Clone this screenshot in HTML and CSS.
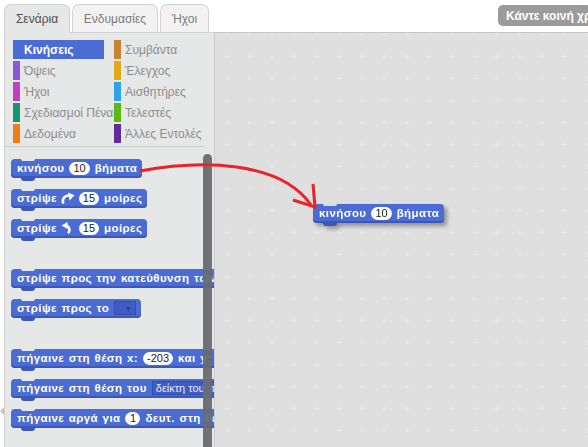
FILE: index.html
```html
<!DOCTYPE html>
<html lang="el">
<head>
  <meta charset="UTF-8" />
  <title>Σενάρια</title>
  <link rel="stylesheet" href="styles.css">
</head>
<body>

  <div class="top">
    <div class="tabs">
      <div class="tab active">Σενάρια</div>
      <div class="tab">Ενδυμασίες</div>
      <div class="tab">Ήχοι</div>
    </div>
    <div class="share">Κάντε κοινή χρήση</div>
  </div>

  <div class="main">
    <div class="gutter"><span class="gutter-arrow"></span></div>

    <div class="side">
      <div class="cats">
        <div class="cat selected">Κινήσεις</div>
        <div class="cat"><i style="background:#c88330"></i>Συμβάντα</div>
        <div class="cat"><i style="background:#8a55d7"></i>Όψεις</div>
        <div class="cat"><i style="background:#e1a91a"></i>Έλεγχος</div>
        <div class="cat"><i style="background:#bb42c3"></i>Ήχοι</div>
        <div class="cat"><i style="background:#2ca5e2"></i>Αισθητήρες</div>
        <div class="cat"><i style="background:#0e9a6c"></i>Σχεδιασμοί Πένας</div>
        <div class="cat"><i style="background:#5cb712"></i>Τελεστές</div>
        <div class="cat"><i style="background:#ee7d16"></i>Δεδομένα</div>
        <div class="cat"><i style="background:#632d99"></i>Άλλες Εντολές</div>
      </div>

      <div class="palette">
        <div class="block">κινήσου <span class="num">10</span> βήματα</div>
        <div class="block">στρίψε
          <svg class="turn" viewBox="0 0 14 12" width="14" height="12"><path d="M2.5 11.5 A5.5 5.5 0 0 1 8.5 3.6" stroke="#fff" stroke-width="2.6" fill="none"/><path d="M7 0.5 L13.5 3.2 L8.6 8.4 Z" fill="#fff"/></svg>
          <span class="num">15</span> μοίρες</div>
        <div class="block">στρίψε
          <svg class="turn" viewBox="0 0 14 12" width="14" height="12"><path d="M5.5 3.4 A4.8 4.8 0 0 1 7 11.2" stroke="#fff" stroke-width="2.6" fill="none"/><path d="M0.5 3.4 L6.5 0 L6.5 7 Z" fill="#fff"/></svg>
          <span class="num">15</span> μοίρες</div>

        <div class="block gap">στρίψε προς την κατεύθυνση των <span class="num">90</span></div>
        <div class="block">στρίψε προς το <span class="drop"><b>▼</b></span></div>

        <div class="block gap">πήγαινε στη θέση x: <span class="num">-203</span> και y: <span class="num">35</span></div>
        <div class="block">πήγαινε στη θέση του <span class="drop text">δείκτη του ποντικιού <b>▼</b></span></div>
        <div class="block">πήγαινε αργά για <span class="num">1</span> δευτ. στη θέση x: <span class="num">0</span></div>
      </div>

      <div class="scrollbar"></div>
    </div>

    <div class="stage">
      <svg class="grid" width="100%" height="100%">
        <defs>
          <pattern id="plus" x="1" y="-10" width="22.5" height="22" patternUnits="userSpaceOnUse">
            <path d="M11 9 v5 M8.5 11.5 h5" stroke="#e8e8e8" stroke-width="1"/>
          </pattern>
        </defs>
        <rect width="100%" height="100%" fill="url(#plus)"/>
      </svg>
      <div class="block dragged">κινήσου <span class="num">10</span> βήματα</div>
    </div>
  </div>

  <svg class="arrow" width="588" height="447" viewBox="0 0 588 447">
    <path d="M140 171 C200 160 280 160 311 205" stroke="#e8232b" stroke-width="3" fill="none"/>
    <path d="M313 184 L315 207 L293 200" stroke="#e8232b" stroke-width="3" fill="none"/>
  </svg>

</body>
</html>
```

FILE: styles.css
```css
* {
  box-sizing: border-box;
  margin: 0;
  padding: 0;
}

body {
  width: 588px;
  height: 447px;
  overflow: hidden;
  background: #fff;
  font-family: 'Liberation Sans', Arial, sans-serif;
  position: relative;
}

/* top: tabs and share button */
.top {
  display: flex;
  height: 32px;
  padding-left: 4px;
}

.tabs {
  flex: 0 0 494px;
  display: flex;
  gap: 2px;
  align-items: flex-end;
}

.tab {
  height: 28px;
  padding: 0 12px;
  display: flex;
  align-items: center;
  font-size: 12px;
  color: #7a7a7a;
  background: #f2f2f2;
  border: 1px solid #d2d2d2;
  border-bottom: none;
  border-radius: 7px 7px 0 0;
}

.tab.active {
  width: 66px;
  justify-content: center;
  color: #4d4d4d;
  background: #e6e7e7;
  height: 29px;
  margin-bottom: -1px;
  position: relative;
  z-index: 2;
}

.tab:nth-child(2) { width: 86px; justify-content: center; }
.tab:nth-child(3) { width: 49px; justify-content: center; }

.share {
  flex-shrink: 0;
  margin-top: 5px;
  height: 21px;
  padding: 0 8px;
  display: flex;
  align-items: center;
  white-space: nowrap;
  background: #9b9b9b;
  color: #fff;
  font-size: 12px;
  font-weight: bold;
  border-radius: 5px;
}

/* main area */
.main {
  display: flex;
  height: 415px;
}

.gutter {
  width: 4px;
  flex-shrink: 0;
  display: flex;
  flex-direction: column;
}

.gutter-arrow {
  margin-top: 375px;
  width: 0;
  height: 0;
  border-top: 4px solid transparent;
  border-bottom: 4px solid transparent;
  border-right: 4px solid #c4c4c4;
}

.side {
  width: 210px;
  flex-shrink: 0;
  background: #e6e7e7;
  border-left: 1px solid #cfcfcf;
  border-top: 1px solid #d2d2d2;
  position: relative;
  overflow: hidden;
}

.cats {
  display: grid;
  grid-template-columns: 91px 91px;
  column-gap: 10px;
  row-gap: 2px;
  padding: 7px 0 0 8px;
  margin-right: 10px;
  padding-bottom: 3px;
  border-bottom: 1px solid #cdcdcd;
}

.cat {
  height: 19px;
  display: flex;
  align-items: center;
  gap: 4px;
  font-size: 12px;
  color: #8d8d8d;
  white-space: nowrap;
}

.cat i {
  width: 7px;
  height: 19px;
  flex-shrink: 0;
}

.cat.selected {
  background: #4a6cd4;
  color: #fff;
  font-weight: bold;
  padding-left: 11px;
}

.palette {
  display: flex;
  flex-direction: column;
  align-items: flex-start;
  padding: 12px 0 0 6px;
}

.block {
  position: relative;
  display: inline-flex;
  align-items: center;
  gap: 5px;
  height: 19px;
  padding: 0 5px 1px 6px;
  margin-bottom: 11px;
  background: #4a6cd4;
  color: #fff;
  font-size: 11.5px;
  font-weight: bold;
  letter-spacing: 0.4px;
  white-space: nowrap;
  word-spacing: 1px;
  border-radius: 4px;
  box-shadow: inset 0 -2px 0 #3b58b8;
}

.block::before {
  content: '';
  position: absolute;
  top: 0;
  left: 10px;
  width: 14px;
  height: 2px;
  background: #e6e7e7;
  border-radius: 0 0 3px 3px;
}

.block::after {
  content: '';
  position: absolute;
  bottom: -3px;
  left: 10px;
  width: 14px;
  height: 3px;
  background: #3b58b8;
  border-radius: 0 0 3px 3px;
}

.block.gap {
  margin-top: 20px;
}

.num {
  display: inline-flex;
  align-items: center;
  justify-content: center;
  min-width: 15px;
  height: 13px;
  padding: 0 4px;
  background: #fff;
  color: #222;
  font-weight: normal;
  font-size: 11px;
  letter-spacing: 0;
  border-radius: 7px;
  word-spacing: 0;
}

.drop {
  display: inline-flex;
  align-items: center;
  justify-content: flex-end;
  width: 22px;
  height: 14px;
  padding: 0 3px;
  background: #3e5cc1;
  border: 1px solid #3250b0;
  font-weight: normal;
}

.drop b {
  font-size: 7px;
  color: #263f8e;
}

.drop.text {
  width: auto;
  gap: 4px;
  color: #e8ecfa;
  font-size: 11px;
  letter-spacing: 0;
  word-spacing: 0;
}

.turn {
  margin: 0 -1px;
}

.scrollbar {
  position: absolute;
  left: 198px;
  top: 121px;
  bottom: 0;
  width: 9px;
  background: rgba(106, 107, 111, 0.95);
  border-radius: 5px 5px 0 0;
}

/* script area */
.stage {
  flex: 1;
  position: relative;
  background: #dfdfdf;
  border-left: 1px solid #cccccc;
  border-top: 1px solid #c6c6c6;
}

.grid {
  position: absolute;
  left: 0;
  top: 0;
}

.dragged {
  position: absolute;
  left: 98px;
  top: 171px;
  margin: 0;
  filter: drop-shadow(3px 3px 2px rgba(0, 0, 0, 0.35));
}

.dragged::before {
  background: #dfdfdf;
}

.arrow {
  position: absolute;
  left: 0;
  top: 0;
  pointer-events: none;
}
```
